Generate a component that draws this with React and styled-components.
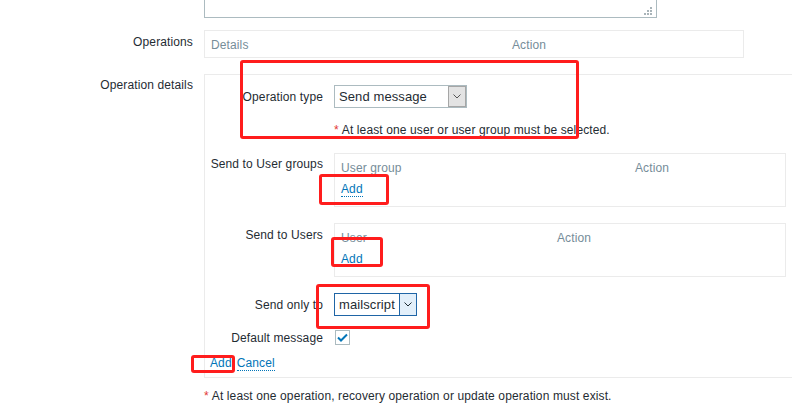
import React from "react";
import styled, { createGlobalStyle } from "styled-components";

const GlobalStyle = createGlobalStyle`
  html, body {
    margin: 0;
    padding: 0;
    background: #ffffff;
    overflow: hidden;
  }
  body {
    font-family: "Liberation Sans", Arial, sans-serif;
    font-size: 12px;
    letter-spacing: 0.12px;
    color: #1f2c33;
  }
`;

const Page = styled.div`
  position: relative;
  width: 792px;
  height: 403px;
  overflow: hidden;
`;

const FormList = styled.div`
  display: flex;
  flex-direction: column;
`;

const FormRow = styled.div`
  display: flex;
  align-items: ${(p) => (p.$center ? "center" : "flex-start")};
  gap: 11px;
  margin-top: ${(p) => p.$mt || 0}px;
`;

const Label = styled.div`
  width: ${(p) => p.$w || 193}px;
  flex: none;
  text-align: right;
  line-height: 14px;
  padding-top: ${(p) => p.$pt || 0}px;
  white-space: nowrap;
`;

const TextareaStub = styled.div`
  position: relative;
  width: 451px;
  height: 17px;
  border: 1px solid #acbbc0;
  border-top: none;
`;

const Grip = styled.svg`
  position: absolute;
  right: 4px;
  bottom: 2px;
`;

const Table = styled.div`
  width: ${(p) => p.$w}px;
  height: ${(p) => p.$h}px;
  flex: none;
  border: 1px solid #ebebeb;
  box-sizing: border-box;
  display: grid;
  grid-template-columns: ${(p) => p.$cols};
  align-content: start;
  padding-top: ${(p) => p.$pt || 0}px;
`;

const HeadCell = styled.div`
  color: #768d99;
  line-height: 14px;
  padding-left: 6px;
`;

const LinkCell = styled.div`
  grid-column: 1 / -1;
  padding-left: 6px;
  margin-top: 7px;
  line-height: 14px;
`;

const Link = styled.a`
  color: #0275b8;
  text-decoration: none;
  border-bottom: 1px dotted #0275b8;
  cursor: pointer;
  margin-right: ${(p) => p.$mr || 0}px;
`;

const DetailsBox = styled.div`
  width: 620px;
  height: 304px;
  flex: none;
  box-sizing: border-box;
  border: 1px solid #ebebeb;
  padding-top: 10px;
  display: flex;
  flex-direction: column;
`;

const Select = styled.div`
  width: ${(p) => p.$w}px;
  height: 23px;
  box-sizing: border-box;
  border: 1px solid ${(p) => (p.$focus ? "#1f65a6" : "#acbbc0")};
  display: flex;
  align-items: stretch;
  background: #fff;
`;

const SelectText = styled.div`
  flex: 1;
  padding-left: 4px;
  font-size: 13px;
  letter-spacing: 0.1px;
  line-height: 21px;
`;

const SelectArrow = styled.div`
  width: 16px;
  display: flex;
  align-items: center;
  justify-content: center;
  background: ${(p) => (p.$focus ? "#e2effa" : "#e3e3e3")};
  border: 1px solid ${(p) => (p.$focus ? "#1f65a6" : "#a6a6a6")};
  border-width: ${(p) => (p.$focus ? "0 0 0 1px" : "1px")};
`;

const Hint = styled.div`
  line-height: 14px;
`;

const Star = styled.span`
  color: #e33734;
  margin-right: 3px;
`;

const Checkbox = styled.div`
  width: 15px;
  height: 15px;
  box-sizing: border-box;
  border: 1px solid #acbbc0;
  display: flex;
  align-items: center;
  justify-content: center;
  margin-left: 1px;
`;

const Actions = styled.div`
  padding-left: 5px;
  margin-top: 11px;
  line-height: 14px;
`;

const Footer = styled.div`
  margin: 11px 0 0 204px;
  line-height: 14px;
`;

const Mark = styled.div`
  position: absolute;
  box-sizing: border-box;
  border: 3px solid #ff1d1d;
  border-radius: 3px;
`;

const Chevron = ({ color }) => (
  <svg width="8" height="5" viewBox="0 0 8 5">
    <path d="M0.5 0.5 L4 4 L7.5 0.5" fill="none" stroke={color} strokeWidth="1" />
  </svg>
);

const marks = [
  [240, 60, 339, 79],
  [319, 174, 70, 31],
  [331, 237, 52, 30],
  [316, 284, 114, 45],
  [191, 355, 44, 18],
];

export default function App() {
  return (
    <Page>
      <GlobalStyle />
      <FormList>
        <FormRow>
          <Label />
          <TextareaStub>
            <Grip width="8" height="8" viewBox="0 0 8 8">
              <g fill="#a9b4b9">
                <rect x="6" y="0" width="2" height="2" />
                <rect x="3" y="3" width="2" height="2" />
                <rect x="6" y="3" width="2" height="2" />
                <rect x="0" y="6" width="2" height="2" />
                <rect x="3" y="6" width="2" height="2" />
                <rect x="6" y="6" width="2" height="2" />
              </g>
            </Grip>
          </TextareaStub>
        </FormRow>

        <FormRow $mt={12}>
          <Label $pt={5}>Operations</Label>
          <Table $w={540} $h={28} $cols="301px 1fr" $pt={7}>
            <HeadCell>Details</HeadCell>
            <HeadCell>Action</HeadCell>
          </Table>
        </FormRow>

        <FormRow $mt={16}>
          <Label $pt={4}>Operation details</Label>
          <DetailsBox>
            <FormRow $center>
              <Label $w={118}>Operation type</Label>
              <Select $w={133}>
                <SelectText>Send message</SelectText>
                <SelectArrow>
                  <Chevron color="#555" />
                </SelectArrow>
              </Select>
            </FormRow>
            <FormRow $mt={15}>
              <Label $w={118} />
              <Hint>
                <Star>*</Star>At least one user or user group must be selected.
              </Hint>
            </FormRow>
            <FormRow $mt={16}>
              <Label $w={118} $pt={4}>Send to User groups</Label>
              <Table $w={452} $h={54} $cols="294px 1fr" $pt={7}>
                <HeadCell>User group</HeadCell>
                <HeadCell>Action</HeadCell>
                <LinkCell>
                  <Link>Add</Link>
                </LinkCell>
              </Table>
            </FormRow>
            <FormRow $mt={16}>
              <Label $w={118} $pt={5}>Send to Users</Label>
              <Table $w={452} $h={54} $cols="216px 1fr" $pt={7}>
                <HeadCell>User</HeadCell>
                <HeadCell>Action</HeadCell>
                <LinkCell>
                  <Link>Add</Link>
                </LinkCell>
              </Table>
            </FormRow>
            <FormRow $mt={16} $center>
              <Label $w={118}>Send only to</Label>
              <Select $w={83} $focus>
                <SelectText>mailscript</SelectText>
                <SelectArrow $focus>
                  <Chevron color="#1f2c33" />
                </SelectArrow>
              </Select>
            </FormRow>
            <FormRow $mt={14} $center>
              <Label $w={118}>Default message</Label>
              <Checkbox>
                <svg width="11" height="9" viewBox="0 0 11 9">
                  <path d="M1 4.5 L4 7.5 L10 1.5" fill="none" stroke="#0275b8" strokeWidth="2" />
                </svg>
              </Checkbox>
            </FormRow>
            <Actions>
              <Link $mr={5}>Add</Link>
              <Link>Cancel</Link>
            </Actions>
          </DetailsBox>
        </FormRow>

        <Footer>
          <Star>*</Star>At least one operation, recovery operation or update operation must exist.
        </Footer>
      </FormList>

      {marks.map(([x, y, w, h], i) => (
        <Mark key={i} style={{ left: x, top: y, width: w, height: h }} />
      ))}
    </Page>
  );
}
